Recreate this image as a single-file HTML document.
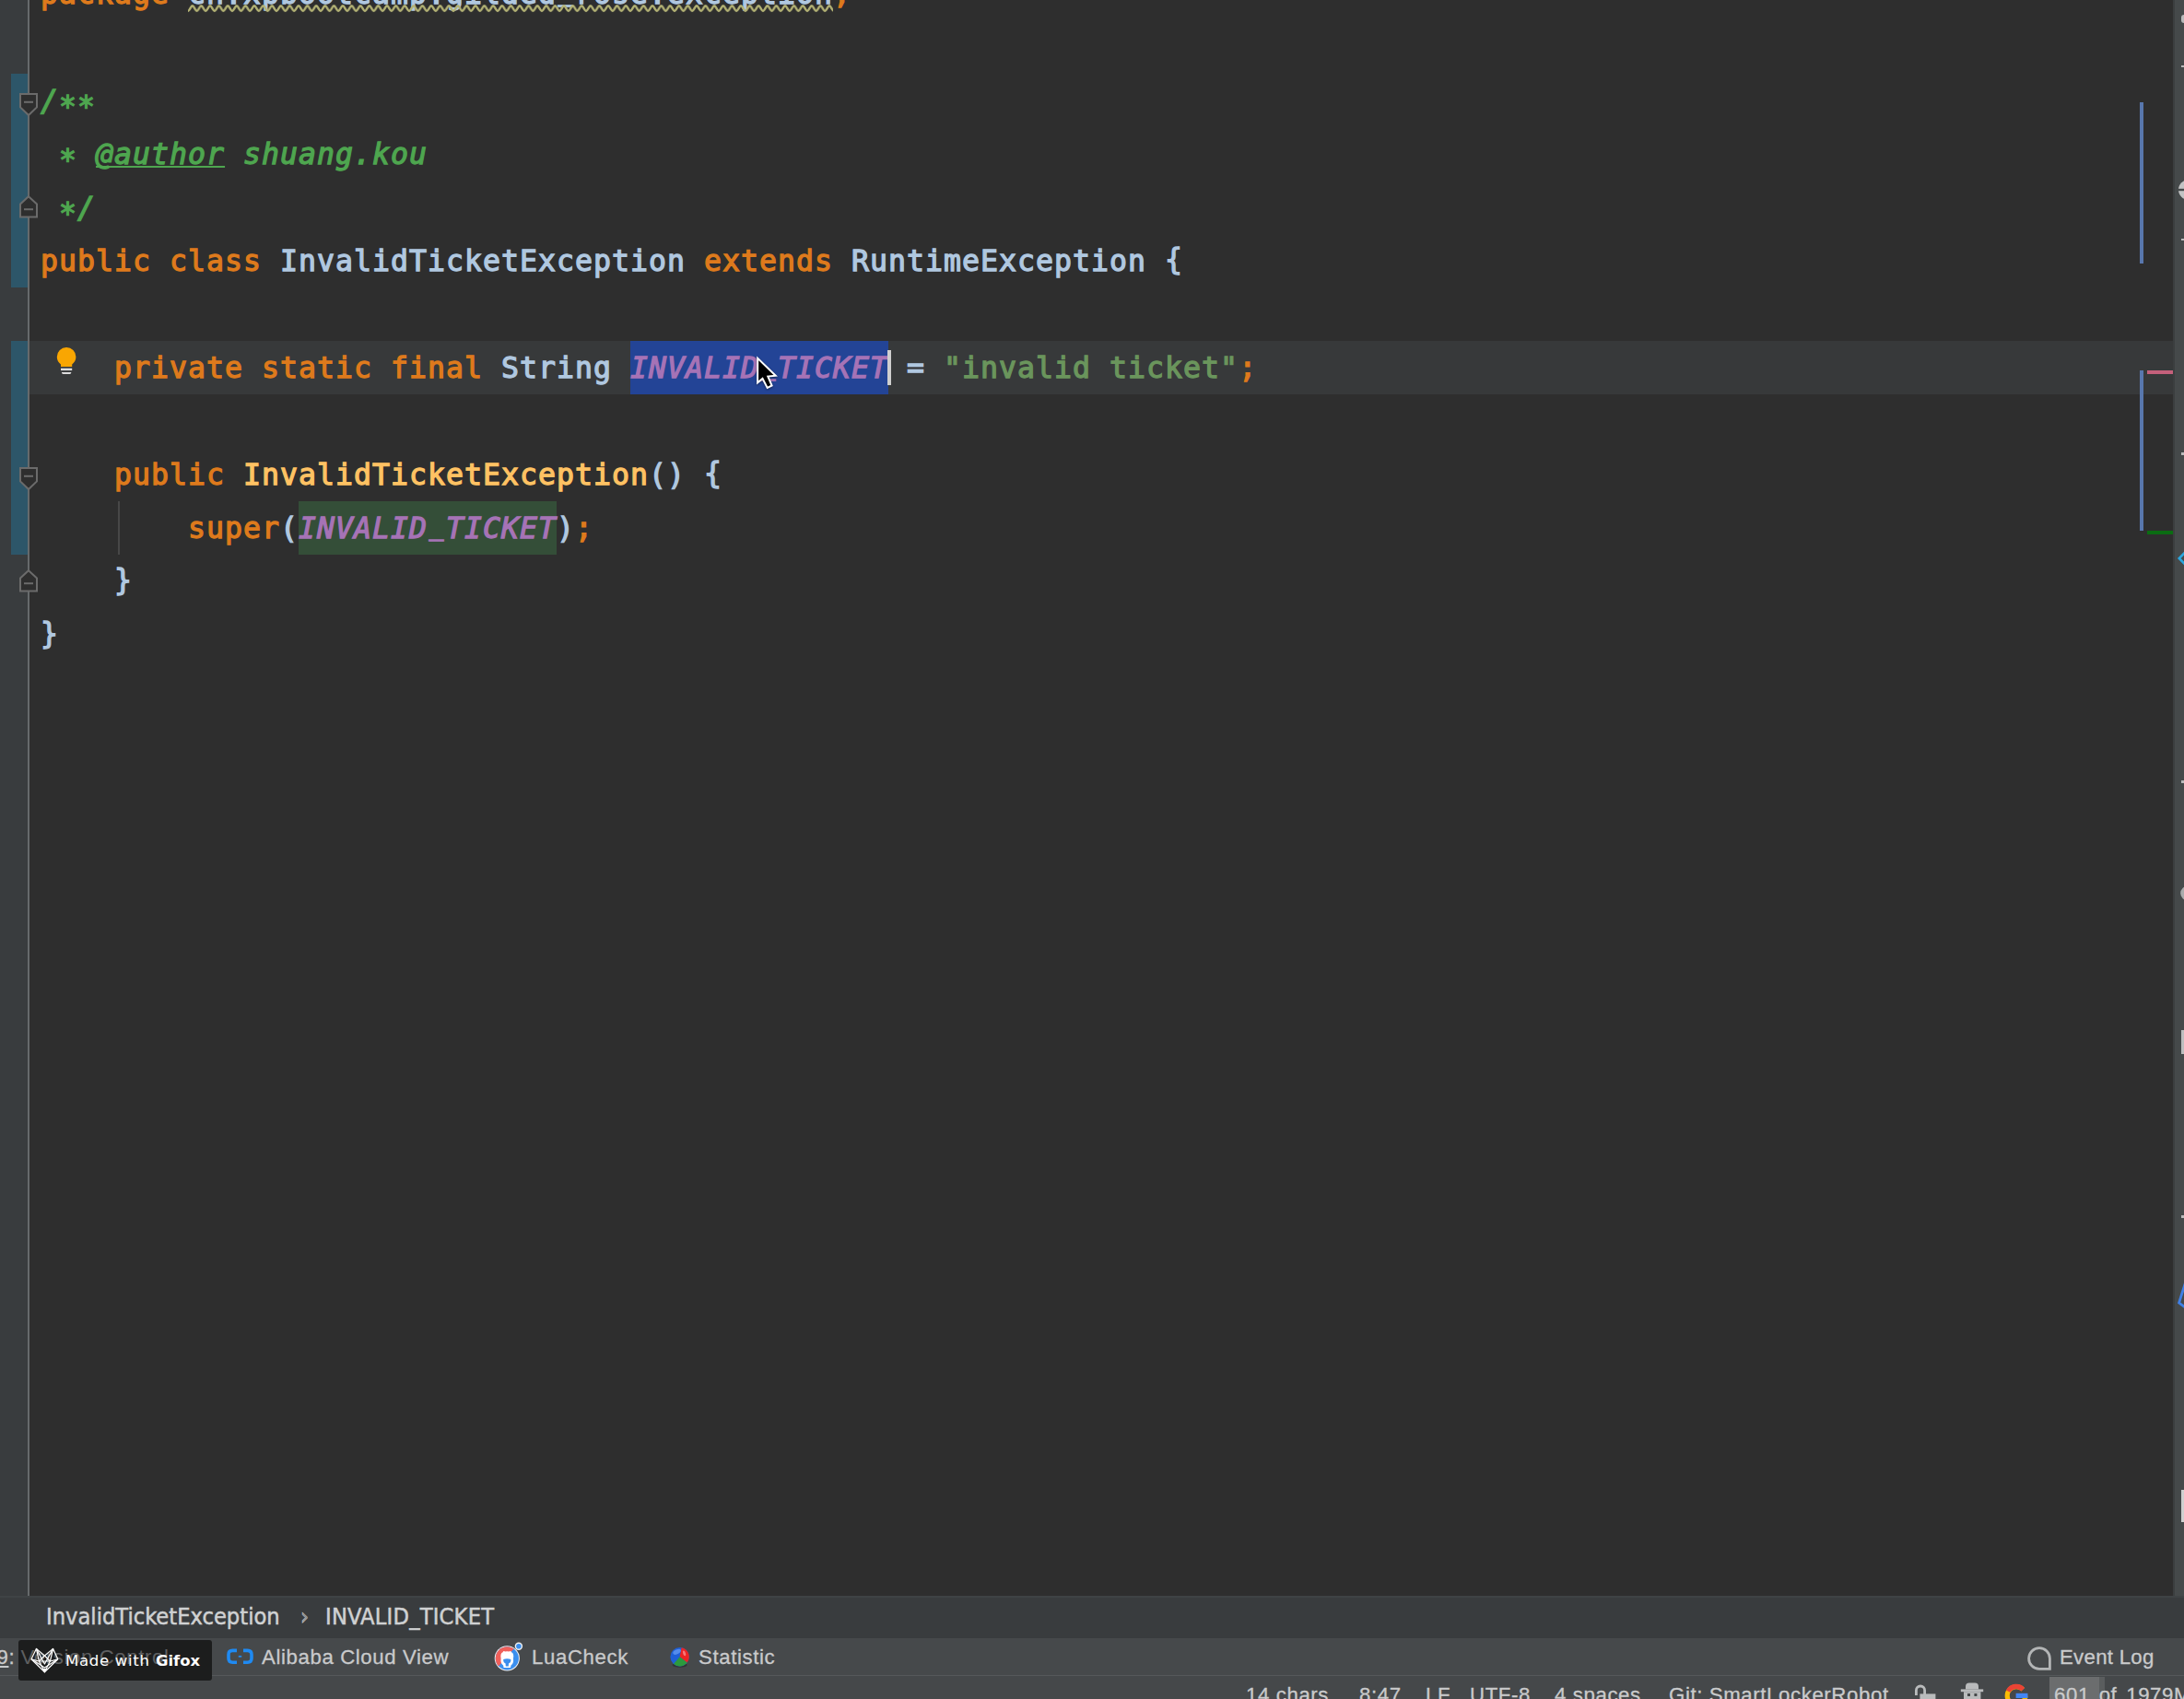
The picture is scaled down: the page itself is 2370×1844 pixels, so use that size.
<!DOCTYPE html>
<html lang="en">
<head>
<meta charset="utf-8">
<title>InvalidTicketException.java</title>
<style>
html,body{margin:0;padding:0;background:#2e2e2e;}
body{width:2370px;height:1844px;position:relative;overflow:hidden;font-family:"Liberation Sans","DejaVu Sans",sans-serif;}
.abs{position:absolute;}
svg{position:absolute;overflow:visible;}
#editor{position:absolute;left:0;top:0;width:2358px;height:1732px;background:#2e2e2e;overflow:hidden;}
#gutter{position:absolute;left:0;top:0;width:30px;height:1732px;background:#393c3e;}
#gline{position:absolute;left:30px;top:0;width:2px;height:1732px;background:#666a6c;}
.vcs{position:absolute;left:12px;width:18px;background:#2d5669;}
#curline{position:absolute;left:32px;top:370px;width:2326px;height:58px;background:#37393a;}
.ln{position:absolute;left:44px;height:58px;line-height:58px;white-space:pre;font-family:"DejaVu Sans Mono","Liberation Mono",monospace;font-size:31.5px;letter-spacing:1.036px;font-weight:normal;-webkit-text-stroke:1.3px;color:#b0c8e0;}
.a{position:relative;top:6px;}
.k{color:#de7a1c;}
.d{color:#4ea64f;font-style:italic;}
.f{color:#a673b6;font-style:italic;}
.s{color:#6a955c;}
.c{color:#ffc263;}
.selbox{position:absolute;left:684px;top:370px;width:280px;height:58px;background:#234496;}
.hlbox{position:absolute;left:324px;top:544px;width:280px;height:58px;background:#344e38;}
#caret{position:absolute;left:963px;top:380px;width:4px;height:38px;background:#cfcfcf;}
#guide{position:absolute;left:128px;top:544px;width:2px;height:58px;background:#474747;}
.b{position:relative;top:-2.5px;}
.u{display:inline-block;transform:translateY(-4.5px) scaleX(0.84);}
.mk{position:absolute;}
#crumbs{position:absolute;left:0;top:1732px;width:2370px;height:46px;background:#393c3e;color:#cfd1d2;font-family:"DejaVu Sans Condensed","DejaVu Sans","Liberation Sans",sans-serif;font-stretch:condensed;font-size:25.2px;line-height:41.6px;-webkit-text-stroke:0.5px #cfd1d2;border-top:2px solid #3f4345;box-sizing:border-box;}
#tools{position:absolute;left:0;top:1778px;width:2370px;height:41px;background:#46494b;color:#c9cacb;font-size:22.2px;letter-spacing:0.62px;line-height:42px;-webkit-text-stroke:0.3px #c9cacb;}
#status{position:absolute;left:0;top:1818px;width:2370px;height:26px;background:#45484a;color:#c9cacb;font-size:22.2px;letter-spacing:0.62px;-webkit-text-stroke:0.3px #c9cacb;border-top:1px solid #55585a;box-sizing:border-box;overflow:hidden;}
#rstrip{position:absolute;left:2358px;top:0;width:12px;height:1778px;background:#45494a;border-left:2px solid #3b3e3f;box-sizing:border-box;overflow:hidden;}
.t{position:absolute;white-space:pre;}
#gifox{position:absolute;left:20px;top:1780px;width:210px;height:44px;border-radius:3px;background:#1c1d1d;color:#fff;font-family:"DejaVu Sans","Liberation Sans",sans-serif;}
</style>
</head>
<body>
<div id="editor">
  <div id="gutter"></div>
  <div class="vcs" style="top:80px;height:232px"></div>
  <div class="vcs" style="top:370px;height:232px"></div>
  <div id="gline"></div>
  <div id="curline"></div>
  <div class="selbox"></div>
  <div class="hlbox"></div>
  <div id="guide"></div>


  <div class="ln" style="top:-36px"><span class="k">package </span>cn.xpbootcamp.gilded<span class="u">_</span>rose.exception<span class="k">;</span></div>
  <div class="ln d" style="top:80px">/<span class="a">**</span></div>
  <div class="ln d" style="top:138px"> <span class="a">*</span> <span style="text-decoration:underline;text-decoration-thickness:2px;text-underline-offset:1.5px;text-decoration-skip-ink:none">@author</span> shuang.kou</div>
  <div class="ln d" style="top:196px"> <span class="a">*</span>/</div>
  <div class="ln" style="top:254px"><span class="k">public class </span>InvalidTicketException <span class="k">extends </span>RuntimeException <span class="b">{</span></div>
  <div class="ln" style="top:370px">    <span class="k">private static final </span>String <span class="f">INVALID<span class="u">_</span>TICKET</span> = <span class="s">"invalid ticket"</span><span class="k">;</span></div>
  <div class="ln" style="top:486px">    <span class="k">public </span><span class="c">InvalidTicketException</span>() <span class="b">{</span></div>
  <div class="ln" style="top:544px">        <span class="k">super</span>(<span class="f">INVALID<span class="u">_</span>TICKET</span>)<span class="k">;</span></div>
  <div class="ln" style="top:602px">    <span class="b">}</span></div>
  <div class="ln" style="top:660px"><span class="b">}</span></div>

  <!-- wavy underline under package name -->
  <svg style="left:204px;top:4px" width="700" height="10" viewBox="0 0 700 10">
    <defs><pattern id="wv" x="0" y="0" width="9.6" height="10" patternUnits="userSpaceOnUse">
      <path d="M-4.8 2.3 C-3.2 2.3 -1.6 8 0 8 C1.6 8 3.2 2.3 4.8 2.3 C6.4 2.3 8 8 9.6 8 C11.2 8 12.8 2.3 14.4 2.3" fill="none" stroke="#b3b274" stroke-width="2.4"/>
    </pattern></defs>
    <rect x="0" y="0" width="700" height="10" fill="url(#wv)"/>
  </svg>
  <div id="caret"></div>

  <!-- fold markers -->
  <svg style="left:20px;top:100px" width="22" height="26"><path d="M2 2 H20 V16.4 L11 25 L2 16.4 Z" fill="#2e2e2e" stroke="#6b6b6b" stroke-width="2"/><path d="M6 10.8 H16" stroke="#6b6b6b" stroke-width="2"/></svg>
  <svg style="left:20px;top:212px" width="22" height="26"><path d="M11 1.2 L20 9.4 V23.6 H2 V9.4 Z" fill="#2e2e2e" stroke="#6b6b6b" stroke-width="2"/><path d="M6 15.2 H16" stroke="#6b6b6b" stroke-width="2"/></svg>
  <svg style="left:20px;top:506px" width="22" height="26"><path d="M2 2 H20 V16.4 L11 25 L2 16.4 Z" fill="#2e2e2e" stroke="#6b6b6b" stroke-width="2"/><path d="M6 10.8 H16" stroke="#6b6b6b" stroke-width="2"/></svg>
  <svg style="left:20px;top:618px" width="22" height="26"><path d="M11 1.2 L20 9.4 V23.6 H2 V9.4 Z" fill="#2e2e2e" stroke="#6b6b6b" stroke-width="2"/><path d="M6 15.2 H16" stroke="#6b6b6b" stroke-width="2"/></svg>

  <!-- intention bulb -->
  <svg style="left:60px;top:375px" width="24" height="32">
    <path d="M6 23 L6 20.4 C3.4 18.5 1.8 15.6 1.8 12.2 A10.3 10.3 0 0 1 22.4 12.2 C22.4 15.6 20.8 18.5 18.2 20.4 L18.2 23 Z" fill="#f9a602"/>
    <rect x="6" y="24.7" width="12.2" height="2.4" fill="#dcdcdc"/>
    <path d="M7 28.9 H17.2 V29.6 Q17.2 31 15.8 31 H8.4 Q7 31 7 29.6 Z" fill="#dcdcdc"/>
  </svg>

  <!-- error stripe markers -->
  <div class="mk" style="left:2322px;top:111px;width:4px;height:175px;background:#5877ad"></div>
  <div class="mk" style="left:2322px;top:402px;width:4px;height:174px;background:#5877ad"></div>
  <div class="mk" style="left:2330px;top:402px;width:28px;height:4px;background:#c4607b"></div>
  <div class="mk" style="left:2330px;top:576px;width:28px;height:4px;background:#0a6c12"></div>

  <!-- mouse pointer -->
  <svg style="left:820px;top:385px;filter:drop-shadow(0 1px 1.2px rgba(0,0,0,0.45))" width="28" height="40">
    <path d="M2.2 3.9 L2.1 30.3 L7.5 25.9 L12.7 35.9 L17.6 33.5 L13.3 23.5 L21.7 22.7 Z" fill="#000" stroke="#fff" stroke-width="2" stroke-linejoin="miter" stroke-miterlimit="6"/>
  </svg>
</div>
<div id="rstrip">
  <div class="abs" style="left:6.5px;top:16px;width:5px;height:9px;background:#b8b9ba;border-radius:3px 0 0 3px"></div>
  <div class="abs" style="left:6.5px;top:70.5px;width:5px;height:2.6px;background:#b8b9ba"></div>
  <svg style="left:3.8px;top:195px" width="8" height="22"><circle cx="11" cy="11" r="11" fill="#c2c3c4"/><path d="M0 11 H12" stroke="#45494a" stroke-width="2.4"/></svg>
  <div class="abs" style="left:6.8px;top:258.5px;width:5px;height:2.6px;background:#b8b9ba"></div>
  <div class="abs" style="left:6.8px;top:491px;width:5px;height:2.6px;background:#b8b9ba"></div>
  <svg style="left:3px;top:596px" width="9" height="20"><path d="M9.5 2 L1.8 10 L9.5 18" fill="none" stroke="#2aa7e0" stroke-width="2.6"/></svg>
  <div class="abs" style="left:6.8px;top:847px;width:5px;height:2.6px;background:#b8b9ba"></div>
  <svg style="left:5.5px;top:961px" width="6" height="17"><circle cx="8" cy="8.5" r="7.8" fill="#a9abac"/></svg>
  <div class="abs" style="left:7.4px;top:1118px;width:4px;height:26px;background:#bdbebf"></div>
  <div class="abs" style="left:6.8px;top:1319px;width:5px;height:2.6px;background:#b8b9ba"></div>
  <svg style="left:3.4px;top:1387px" width="9" height="35"><path d="M9.5 2 L1.6 27 L9.5 33" fill="none" stroke="#3f7fe6" stroke-width="2.8"/></svg>
  <div class="abs" style="left:7.4px;top:1617px;width:4px;height:35px;background:#cfd0d0"></div>
</div>
<div id="crumbs"><span class="t" style="left:50px">InvalidTicketException</span><span class="t" style="left:326px;color:#7f8284">›</span><span class="t" style="left:353px;letter-spacing:0.2px">INVALID_TICKET</span></div>
<div id="tools">

  <!-- Alibaba Cloud icon -->
  <svg style="left:246px;top:11px" width="29" height="18">
    <path d="M11 2.4 H6.4 Q2 2.4 2 6.8 V10.8 Q2 15.2 6.4 15.2 H11" fill="none" stroke="#1f8af2" stroke-width="3.6"/>
    <path d="M18 2.4 H22.6 Q27 2.4 27 6.8 V10.8 Q27 15.2 22.6 15.2 H18" fill="none" stroke="#1f8af2" stroke-width="3.6"/>
    <path d="M12.8 8.8 H16.2" stroke="#1f8af2" stroke-width="1.8"/>
  </svg>
  <!-- LuaCheck icon -->
  <svg style="left:535px;top:3px" width="36" height="34">
    <defs><clipPath id="lc"><circle cx="15.3" cy="18.8" r="12.6"/></clipPath></defs>
    <circle cx="15.3" cy="18.8" r="13.6" fill="#f2f2f2"/>
    <g clip-path="url(#lc)">
      <rect x="0" y="0" width="36" height="36" fill="#3b8fee"/>
      <path d="M0 0 H30 L2 32 H0 Z" fill="#f0605a"/>
    </g>
    <path d="M8.6 19 Q7.6 13.4 10.6 12.2 Q11.4 10.2 13.2 11.6 Q15.3 10.8 17.4 11.6 Q19.2 10.2 20 12.2 Q23 13.4 22 19 Q22.6 24.5 19.5 26.5 L19 29 H11.6 L11.1 26.5 Q8 24.5 8.6 19 Z" fill="#fff"/>
    <path d="M11.2 20 Q15.3 18.6 19.4 20 Q19.6 23.6 17 24.4 L16.8 27.4 H13.8 L13.6 24.4 Q11 23.6 11.2 20 Z" fill="#3b8fee"/>
    <circle cx="27.9" cy="5.8" r="4.2" fill="#f2f2f2"/>
    <circle cx="27.9" cy="5.8" r="2.8" fill="#3b8fee"/>
  </svg>
  <!-- Statistic icon -->
  <svg style="left:726px;top:8px" width="24" height="26">
    <ellipse cx="11.6" cy="21.2" rx="8" ry="2.6" fill="#2a2c2d" opacity="0.7"/>
    <circle cx="11.6" cy="12.2" r="10.2" fill="#1f5fd6"/>
    <path d="M11.6 12.2 L13.6 2.2 A10.2 10.2 0 0 1 19.6 18.6 Z" fill="#ec2424"/>
    <path d="M11.6 12.2 L19.6 18.6 A10.2 10.2 0 0 1 5 20 Z" fill="#2c9a3c"/>
    <ellipse cx="8.6" cy="6.8" rx="4.6" ry="2.4" fill="#7fb0ff" opacity="0.55" transform="rotate(-25 8.6 6.8)"/>
    <ellipse cx="16.6" cy="8.4" rx="1.4" ry="3" fill="#ffb0b0" opacity="0.6" transform="rotate(-20 16.6 8.4)"/>
  </svg>
  <!-- Event Log icon -->
  <svg style="left:2199px;top:8px" width="28" height="28">
    <path d="M14 2.6 A11.4 11.4 0 0 1 25.4 14 V25.4 H14 A11.4 11.4 0 0 1 14 2.6 Z" fill="none" stroke="#b3b5b6" stroke-width="2.8"/>
  </svg>
  <span class="t" style="left:-3.5px"><u>9</u>:</span>
  <span class="t" style="left:284px">Alibaba Cloud View</span>
  <span class="t" style="left:577px">LuaCheck</span>
  <span class="t" style="left:758px">Statistic</span>
  <span class="t" style="left:2235px;letter-spacing:0.3px">Event Log</span>
</div>
<div id="status">
  <span class="t" style="left:1352px;top:7.5px">14 chars</span>
  <span class="t" style="left:1475px;top:7.5px">8:47</span>
  <span class="t" style="left:1547px;top:7.5px">LF</span>
  <span class="t" style="left:1595px;top:7.5px">UTF-8</span>
  <span class="t" style="left:1687px;top:7.5px">4 spaces</span>
  <span class="t" style="left:1811px;top:7.5px">Git: SmartLockerRobot</span>

  <!-- lock (unlocked) -->
  <svg style="left:2077px;top:9px" width="24" height="18">
    <path d="M2.4 12 V6.6 A4.6 4.6 0 0 1 11.6 6.6 V11" fill="none" stroke="#b9bbbc" stroke-width="2.8"/>
    <rect x="6.4" y="10.4" width="17" height="10" fill="#b9bbbc"/>
  </svg>
  <!-- hector / inspections profile -->
  <svg style="left:2127px;top:7px" width="26" height="20">
    <path d="M6 7.6 V4.6 Q6 0.6 10 0.6 H16 Q20 0.6 20 4.6 V7.6 Z" fill="#b9bbbc"/>
    <rect x="0.8" y="7.4" width="24.4" height="2.8" fill="#b9bbbc"/>
    <rect x="4" y="10.2" width="18.4" height="10" fill="#b9bbbc"/>
    <rect x="8" y="12" width="3" height="3" fill="#45484a"/>
    <rect x="15.4" y="12" width="3" height="3" fill="#45484a"/>
  </svg>
  <!-- google -->
  <svg style="left:2175px;top:8px" width="26" height="26">
    <circle cx="13" cy="13.4" r="9.8" fill="none" stroke="#fbbc05" stroke-width="5.2"/>
    <path d="M4.2 8.6 A9.8 9.8 0 0 1 20.4 6.8" fill="none" stroke="#ea4335" stroke-width="5.2"/>
    <path d="M20.4 6.8 A9.8 9.8 0 0 1 22.8 13.4" fill="none" stroke="#45484a" stroke-width="6"/>
    <rect x="12.6" y="10.8" width="12.8" height="5.2" fill="#4285f4"/>
  </svg>
  <div class="abs" style="left:2224px;top:1px;width:54px;height:25px;background:#6b6d6e"></div>
  <div class="abs" style="left:2278px;top:1px;width:6px;height:25px;background:#5a5d5e"></div>
  <span class="t" style="left:2229px;top:7.5px;word-spacing:3px">601 of 1979M</span>
</div>
<div id="gifox"><span class="t" style="left:2.5px;top:-2px;font-family:'Liberation Sans',sans-serif;font-size:22.2px;letter-spacing:0.62px;line-height:42px;color:#5e5f60">Version Control</span><svg style="left:13px;top:8px" width="31" height="29">
    <g fill="none" stroke="#fff" stroke-width="1.2" stroke-linejoin="round">
      <path d="M6.4 1.4 L15.4 9 L24.6 1.4 L29.8 12.8 L15.4 26.8 L1 12.8 Z"/>
      <path d="M6.4 1.4 L9.4 15 L15.4 26.8 L21.4 15 L24.6 1.4"/>
      <path d="M1 12.8 L9.4 15 L15.4 9 L21.4 15 L29.8 12.8"/>
      <path d="M6.4 1.4 L15.4 18 L24.6 1.4 M9.4 15 L21.4 15 M1 12.8 L15.4 22 L29.8 12.8"/>
    </g>
    <path d="M13 23 L15.4 27.2 L17.8 23 Z" fill="#fff"/>
  </svg><span class="t" style="left:51px;top:12px;font-size:16.6px;line-height:22px;letter-spacing:0.65px">Made with</span><b class="t" style="left:149px;top:12px;font-size:16.4px;line-height:22px">Gifox</b></div>
</body>
</html>
